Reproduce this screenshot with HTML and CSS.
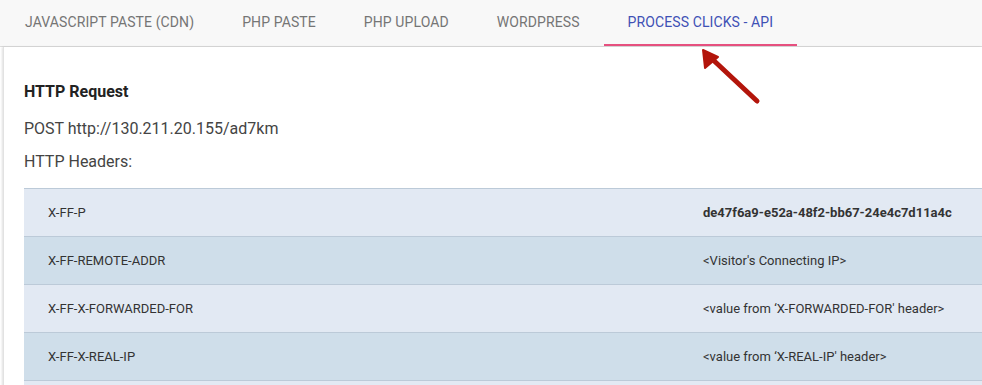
FILE: index.html
```html
<!DOCTYPE html>
<html lang="en">
<head>
    <meta charset="UTF-8">
    <meta name="viewport" content="width=device-width, initial-scale=1.0">
    <title>Process Clicks - API</title>
    <link rel="stylesheet" href="styles.css">
</head>
<body>
    <div class="tabs">
        <div class="tab">JAVASCRIPT PASTE (CDN)</div>
        <div class="tab">PHP PASTE</div>
        <div class="tab">PHP UPLOAD</div>
        <div class="tab">WORDPRESS</div>
        <div class="tab active">PROCESS CLICKS - API</div>
    </div>
    <div class="card">
        <h3>HTTP Request</h3>
        <p class="line first">POST http://130.211.20.155/ad7km</p>
        <p class="line">HTTP Headers:</p>
        <div class="headers">
            <div class="row">
                <div class="key">X-FF-P</div>
                <div class="val strong">de47f6a9-e52a-48f2-bb67-24e4c7d11a4c</div>
            </div>
            <div class="row">
                <div class="key">X-FF-REMOTE-ADDR</div>
                <div class="val">&lt;Visitor's Connecting IP&gt;</div>
            </div>
            <div class="row">
                <div class="key">X-FF-X-FORWARDED-FOR</div>
                <div class="val">&lt;value from ‘X-FORWARDED-FOR' header&gt;</div>
            </div>
            <div class="row">
                <div class="key">X-FF-X-REAL-IP</div>
                <div class="val">&lt;value from ‘X-REAL-IP' header&gt;</div>
            </div>
            <div class="row">
                <div class="key">&nbsp;</div>
                <div class="val">&nbsp;</div>
            </div>
        </div>
    </div>
    <!-- annotation arrow pointing at the active tab -->
    <svg class="arrow" width="80" height="70" viewBox="0 0 80 70">
        <path d="M57 53 L10 9" stroke="#b3150b" stroke-width="5" stroke-linecap="round"/>
        <path d="M3 2 L5 20 L18 9 Z" fill="#b3150b" stroke="#b3150b" stroke-width="2" stroke-linejoin="round"/>
    </svg>
</body>
</html>
```

FILE: styles.css
```css
html, body {
    overflow: hidden;
}
body {
    margin: 0;
    font-family: Roboto, "Liberation Sans", sans-serif;
    background: #fff;
    color: #444;
    height: 385px;
    position: relative;
}
.tabs {
    display: flex;
    height: 46px;
    padding-left: 1px;
    background: #f8f8f8;
    border-bottom: 1px solid #dcdcdc;
}
.tab {
    padding: 0 24px;
    line-height: 44px;
    font-size: 14px;
    letter-spacing: 0.1px;
    color: #757575;
    border-bottom: 2px solid transparent;
}
.tab.active {
    color: #3f51b5;
    border-bottom-color: #e6507f;
}
.card {
    margin-left: 3px;
    padding: 35px 0 0 20px;
    border-left: 1px solid #e2e2e2;
    box-shadow: -1px 0 2px rgba(0, 0, 0, 0.12);
}
h3 {
    margin: 0;
    font-size: 16px;
    line-height: 20px;
    font-weight: 700;
    color: #222;
}
.line {
    margin: 13px 0 0;
    font-size: 16px;
    line-height: 20px;
    color: #444;
}
.line.first {
    margin-top: 17px;
}
.headers {
    margin-top: 16px;
}
.row {
    display: grid;
    grid-template-columns: 655px 1fr;
    height: 47px;
    border-top: 1px solid #bccad8;
    background: #e2e9f3;
    font-size: 13px;
    color: #333;
}
.row:nth-child(even) {
    background: #cfdeea;
}
.key, .val {
    padding: 0 24px;
    line-height: 47px;
    white-space: nowrap;
}
.val.strong {
    font-weight: 700;
    color: #333;
}
.arrow {
    position: absolute;
    left: 700px;
    top: 48px;
}
```
